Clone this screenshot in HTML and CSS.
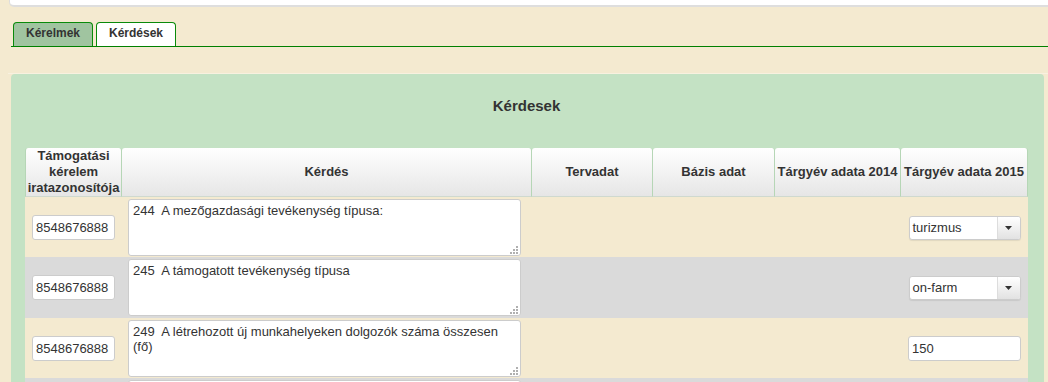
FILE: index.html
```html
<!DOCTYPE html>
<html lang="hu">
<head>
<meta charset="utf-8">
<title>Kérdések</title>
<link rel="stylesheet" href="styles.css">
</head>
<body>
<div class="topbar"></div>
<div class="tabs">
  <a class="tab">Kérelmek</a>
  <a class="tab active">Kérdések</a>
</div>
<div class="content">
  <div class="panel">
    <h2 class="title">Kérdesek</h2>
    <table class="grid">
      <colgroup>
        <col class="c1"><col class="c2"><col class="c3"><col class="c4"><col class="c5"><col class="c6">
      </colgroup>
      <thead>
        <tr>
          <th>Támogatási kérelem iratazonosítója</th>
          <th>Kérdés</th>
          <th>Tervadat</th>
          <th>Bázis adat</th>
          <th>Tárgyév adata 2014</th>
          <th>Tárgyév adata 2015</th>
        </tr>
      </thead>
      <tbody>
        <tr class="odd">
          <td class="id"><input class="inp id-inp" type="text" value="8548676888"></td>
          <td class="q"><span class="ta"><textarea>244  A mezőgazdasági tevékenység típusa:</textarea><svg class="grip" width="8" height="8" viewBox="0 0 8 8"><rect x="6" y="0" width="2" height="2"/><rect x="3" y="3" width="2" height="2"/><rect x="6" y="3" width="2" height="2"/><rect x="0" y="6" width="2" height="2"/><rect x="3" y="6" width="2" height="2"/><rect x="6" y="6" width="2" height="2"/></svg></span></td>
          <td></td><td></td><td></td>
          <td class="val"><span class="sel"><span class="sel-text">turizmus</span><span class="sel-btn"><svg width="7" height="4" viewBox="0 0 7 4"><polygon points="0,0 7,0 3.5,4"/></svg></span></span></td>
        </tr>
        <tr class="even">
          <td class="id"><input class="inp id-inp" type="text" value="8548676888"></td>
          <td class="q"><span class="ta"><textarea>245  A támogatott tevékenység típusa</textarea><svg class="grip" width="8" height="8" viewBox="0 0 8 8"><rect x="6" y="0" width="2" height="2"/><rect x="3" y="3" width="2" height="2"/><rect x="6" y="3" width="2" height="2"/><rect x="0" y="6" width="2" height="2"/><rect x="3" y="6" width="2" height="2"/><rect x="6" y="6" width="2" height="2"/></svg></span></td>
          <td></td><td></td><td></td>
          <td class="val"><span class="sel"><span class="sel-text">on-farm</span><span class="sel-btn"><svg width="7" height="4" viewBox="0 0 7 4"><polygon points="0,0 7,0 3.5,4"/></svg></span></span></td>
        </tr>
        <tr class="odd">
          <td class="id"><input class="inp id-inp" type="text" value="8548676888"></td>
          <td class="q"><span class="ta"><textarea>249  A létrehozott új munkahelyeken dolgozók száma összesen (fő)</textarea><svg class="grip" width="8" height="8" viewBox="0 0 8 8"><rect x="6" y="0" width="2" height="2"/><rect x="3" y="3" width="2" height="2"/><rect x="6" y="3" width="2" height="2"/><rect x="0" y="6" width="2" height="2"/><rect x="3" y="6" width="2" height="2"/><rect x="6" y="6" width="2" height="2"/></svg></span></td>
          <td></td><td></td><td></td>
          <td class="val"><input class="inp num-inp" type="text" value="150"></td>
        </tr>
        <tr class="even">
          <td class="id"><input class="inp id-inp" type="text" value="8548676888"></td>
          <td class="q"><span class="ta"><textarea></textarea></span></td>
          <td></td><td></td><td></td>
          <td class="val"></td>
        </tr>
      </tbody>
    </table>
  </div>
</div>
</body>
</html>
```

FILE: styles.css
```css
html, body {
  margin: 0;
  padding: 0;
  background: #f4ead0;
  font-family: "Liberation Sans", Arial, sans-serif;
  color: #333;
  overflow: hidden;
}

.topbar {
  height: 5px;
  margin-left: 9px;
  background: #fff;
  border-left: 1px solid #ddd;
  border-bottom: 2px solid #dedede;
  border-bottom-left-radius: 5px;
}

.tabs {
  display: flex;
  gap: 3px;
  margin: 15px 0 0 11px;
  padding-left: 2px;
  border-bottom: 1px solid #008000;
}

.tab {
  box-sizing: border-box;
  width: 80px;
  height: 24px;
  border: 1px solid #0a8a0a;
  border-bottom: none;
  border-radius: 4px 4px 0 0;
  background: #a0c4a0;
  font-size: 12px;
  font-weight: bold;
  line-height: 21px;
  text-align: center;
  color: #333;
}

.tab.active {
  background: #fff;
}

.content {
  margin: 26px 0 0 8px;
  padding-left: 3px;
  border-top: 1px solid #f8f1e0;
}

.panel {
  margin-right: 4px;
  padding: 0 16px 0 14px;
  background: #c4e2c4;
  border-radius: 4px 4px 0 0;
}

.title {
  margin: 0;
  padding: 23px 0 33px;
  font-size: 15px;
  line-height: 18px;
  font-weight: bold;
  text-align: center;
  color: #333;
}

.grid {
  width: 100%;
  border-collapse: separate;
  border-spacing: 0;
  table-layout: fixed;
}

.c1 { width: 97px; }
.c2 { width: 410px; }
.c3 { width: 121px; }
.c4 { width: 122px; }
.c5 { width: 126px; }
.c6 { width: 127px; }

.grid th {
  padding: 0;
  height: 48px;
  background: linear-gradient(#ffffff, #e6e6e6);
  border-right: 1px solid #b6d6b6;
  border-bottom: 1px solid #cfd9cf;
  border-radius: 3px 3px 0 0;
  font-size: 13px;
  line-height: 16px;
  font-weight: bold;
  color: #333;
  text-align: center;
  vertical-align: middle;
  white-space: normal;
}

.grid th:first-child {
  border-left: 1px solid #b6d6b6;
}

.grid td {
  padding: 2px 0 1.4px;
  vertical-align: middle;
}

.odd td { background: #f4ead0; }
.even td { background: #dadada; }

.grid td.id,
.grid td.val {
  text-align: center;
}

.grid td.q {
  padding-left: 6px;
}

.inp {
  box-sizing: border-box;
  height: 25px;
  border: 1px solid #cccccc;
  border-radius: 3px;
  background: #fff;
  padding: 0 3px;
  font-family: "Liberation Sans", Arial, sans-serif;
  font-size: 13px;
  color: #333;
  vertical-align: middle;
  outline: none;
}

.id-inp { width: 83px; }
.num-inp { width: 113px; }

.ta {
  position: relative;
  display: block;
  width: 393px;
  height: 57px;
}

.ta textarea {
  display: block;
  box-sizing: border-box;
  width: 100%;
  height: 100%;
  margin: 0;
  padding: 3px 4px;
  border: 1px solid #cccccc;
  border-radius: 3px;
  background: #fff;
  font-family: "Liberation Sans", Arial, sans-serif;
  font-size: 13px;
  line-height: 15px;
  color: #333;
  resize: none;
  overflow: hidden;
  outline: none;
}

.grip {
  position: absolute;
  right: 3px;
  bottom: 2px;
  fill: #b0b0b0;
}

.sel {
  display: inline-flex;
  box-sizing: border-box;
  width: 112px;
  height: 24px;
  border: 1px solid #cccccc;
  border-radius: 3px;
  background: #fff;
  box-shadow: 0 1px 1px rgba(0, 0, 0, 0.08);
  text-align: left;
  vertical-align: middle;
}

.sel-text {
  flex: 1;
  padding-left: 3px;
  font-size: 13px;
  line-height: 22px;
  color: #333;
}

.sel-btn {
  display: flex;
  align-items: center;
  justify-content: center;
  width: 22px;
  border-left: 1px solid #dddddd;
  border-radius: 0 2px 2px 0;
  background: linear-gradient(#ffffff, #e2e2e2);
  fill: #333;
}
```
